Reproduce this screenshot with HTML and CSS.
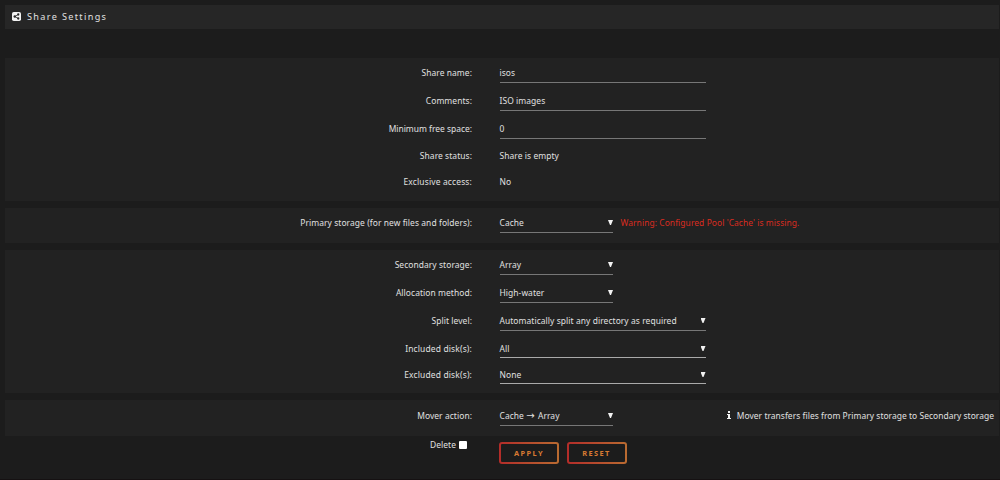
FILE: index.html
```html
<!DOCTYPE html>
<html lang="en">
<head>
<meta charset="utf-8">
<title>Share Settings</title>
<link rel="stylesheet" href="styles.css">
</head>
<body>
<main class="page">
  <header class="title">
    <svg class="share-icon" viewBox="0 0 18 18" aria-hidden="true">
      <rect width="18" height="18" rx="3.5" fill="#f2f2f2"/>
      <path d="M12.5 5 5.8 9l6.7 4" fill="none" stroke="#262626" stroke-width="1.6"/>
      <circle cx="12.5" cy="5" r="2.3" fill="#262626"/><circle cx="5.5" cy="9" r="2.4" fill="#262626"/><circle cx="12.5" cy="13" r="2.3" fill="#262626"/>
    </svg>
    <h1>Share Settings</h1>
  </header>

  <section class="panel general">
    <div class="row"><label>Share name:</label><div class="field wide">isos</div></div>
    <div class="row"><label>Comments:</label><div class="field wide">ISO images</div></div>
    <div class="row"><label class="tight">Minimum free space:</label><div class="field wide">0</div></div>
    <div class="row status"><label>Share status:</label><span>Share is empty</span></div>
    <div class="row compact"><label class="loose">Exclusive access:</label><span>No</span></div>
  </section>

  <section class="panel primary">
    <div class="row"><label>Primary storage (for new files and folders):</label><div class="field select">Cache<i class="caret"></i></div><span class="warning">Warning: Configured Pool 'Cache' is missing.</span></div>
  </section>

  <section class="panel secondary">
    <div class="row"><label>Secondary storage:</label><div class="field select">Array<i class="caret"></i></div></div>
    <div class="row"><label>Allocation method:</label><div class="field select">High-water<i class="caret"></i></div></div>
    <div class="row"><label>Split level:</label><div class="field select wide">Automatically split any directory as required<i class="caret"></i></div></div>
    <div class="row disks"><label class="loose">Included disk(s):</label><div class="field select wide bright">All<i class="caret"></i></div></div>
    <div class="row disks"><label class="loose">Excluded disk(s):</label><div class="field select wide bright">None<i class="caret"></i></div></div>
  </section>

  <section class="panel mover">
    <div class="row"><label>Mover action:</label><div class="field select">Cache <span class="arrow">→</span> Array<i class="caret"></i></div>
      <p class="hint"><svg class="info-icon" viewBox="0 0 4 8" aria-hidden="true"><path d="M1 0h2v2H1zM0 3h3v4h1v1H0V7h1V4H0z" fill="#f2f2f2"/></svg><span>Mover transfers files from Primary storage to Secondary storage</span></p></div>
  </section>

  <footer class="actions">
    <div class="delete"><span>Delete</span><i class="checkbox"></i></div>
    <button class="button">APPLY</button>
    <button class="button">RESET</button>
  </footer>
</main>
</body>
</html>
```
FILE: styles.css
```css
* { box-sizing: border-box; }
body { margin: 0; background: #1c1c1c; color: #e0e0e0; font: 8.45px/12px "Noto Sans", sans-serif; letter-spacing: .07px; }
.page { height: 480px; padding: 5px 1px 0 5px; overflow: hidden; border-bottom: 1px solid #151112; }
.title { display: flex; align-items: center; gap: 6px; height: 24px; margin-bottom: 29px; padding: 0 0 1px 7px; background: #262626; }
.title h1 { margin: 0; font-size: 9.1px; line-height: 12px; font-weight: 400; letter-spacing: 1.35px; }
.share-icon { width: 9px; height: 9px; }
.panel { margin-bottom: 7px; background: #222; }
.general, .secondary { height: 143px; }
.primary { height: 35px; }
.mover { height: 36px; margin-bottom: 0; padding-top: 1px; }
.row { display: flex; height: 28px; }
.row label { width: 467px; margin-right: 27.5px; padding-top: 8.5px; text-align: right; white-space: nowrap; }
.row label.tight { letter-spacing: 0; }
.row label.loose { letter-spacing: .16px; }
.row > span { padding-top: 8px; white-space: nowrap; }
.status { height: 27px; }
.status label { padding-top: 8px; }
.compact { height: 26px; }
.row.compact label, .row.compact > span { padding-top: 7px; }
.field { position: relative; width: 113.5px; height: 25px; padding-top: 9px; border-bottom: 1px solid #777; white-space: nowrap; }
.field.wide { width: 206px; }
.bright { border-color: #aaa; }
.caret { position: absolute; right: 0; top: 12px; width: 5px; height: 5px; background: #f2f2f2; clip-path: polygon(0 0, 100% 0, 60% 100%, 40% 100%); }
.primary .row > .warning { margin-left: 7.5px; padding-top: 9px; color: #da2c20; }
.disks { height: 26px; }
.disks .field { height: 24px; }
.arrow { margin-right: 1px; font-family: "DejaVu Sans", sans-serif; font-size: 10px; line-height: 8px; }
.hint { display: flex; gap: 6px; margin: 0 5px 0 auto; padding-top: 9px; letter-spacing: .04px; white-space: nowrap; }
.info-icon { width: 4px; height: 8px; margin-top: 1px; }
.actions { display: flex; align-items: flex-start; }
.delete { display: flex; justify-content: flex-end; gap: 3px; width: 462px; margin-right: 32px; padding-top: 3px; }
.checkbox { width: 8px; height: 8px; margin-top: 2px; border-radius: 1px; background: #fff; }
.button { width: 60px; height: 22px; margin: 6px 7.5px 0 0; padding: 0; border: 2px solid transparent; border-radius: 3px; background: linear-gradient(#1c1c1c, #1c1c1c) padding-box, linear-gradient(90deg, #b32c29, #b96b31) border-box; color: #d87a32; font: 700 7.4px/18px "Noto Sans", sans-serif; letter-spacing: 1.4px; }
```
